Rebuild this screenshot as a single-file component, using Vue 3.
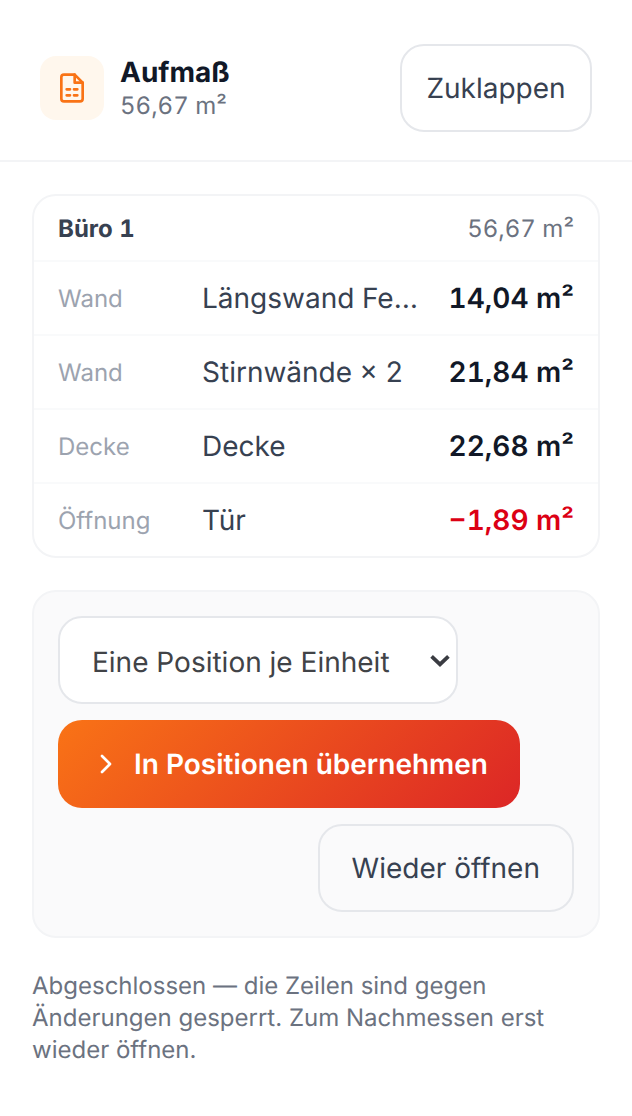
<script setup>
const rows = [
  { kind: "Wand", name: "Längswand Fenster", value: "14,04 m²" },
  { kind: "Wand", name: "Stirnwände × 2", value: "21,84 m²" },
  { kind: "Decke", name: "Decke", value: "22,68 m²" },
  { kind: "Öffnung", name: "Tür", value: "−1,89 m²", negative: true },
];
</script>

<template>
  <div class="page">
    <header class="header">
      <div class="header-left">
        <div class="icon-box">
          <svg width="16" height="16" viewBox="0 0 24 24" fill="none" stroke="#f97316" stroke-width="2" stroke-linecap="round" stroke-linejoin="round">
            <path d="M14 2H6a2 2 0 0 0-2 2v16a2 2 0 0 0 2 2h12a2 2 0 0 0 2-2V8z" />
            <path d="M14 2v6h6" />
            <path d="M8 13h2.5M13.5 13h2.5M8 17.5h2.5M13.5 17.5h2.5" />
          </svg>
        </div>
        <div>
          <div class="title">Aufmaß</div>
          <div class="subtitle">56,67 m²</div>
        </div>
      </div>
      <button class="btn-outline collapse">Zuklappen</button>
    </header>

    <main class="content">
      <section class="card">
        <div class="card-head">
          <span class="room">Büro 1</span>
          <span class="room-total">56,67 m²</span>
        </div>
        <div class="row" v-for="row in rows" :key="row.kind + row.name">
          <span class="kind">{{ row.kind }}</span>
          <span class="name">{{ row.name }}</span>
          <span class="value" :class="{ negative: row.negative }">{{ row.value }}</span>
        </div>
      </section>

      <section class="panel">
        <div class="select-wrap">
          <select class="mode">
            <option>Eine Position je Einheit</option>
            <option>Eine Position je Zeile</option>
          </select>
          <svg class="select-arrow" width="10" height="7" viewBox="0 0 10 7" fill="none" stroke="#3a3c42" stroke-width="1.9">
            <path d="M0.8 1.2 5 5.2l4.2-4" />
          </svg>
        </div>
        <button class="btn-primary">
          <svg width="16" height="16" viewBox="0 0 24 24" fill="none" stroke="#fff" stroke-width="2" stroke-linecap="round" stroke-linejoin="round">
            <path d="m9 18 6-6-6-6" />
          </svg>
          In Positionen übernehmen
        </button>
        <div class="panel-actions">
          <button class="btn-outline reopen">Wieder öffnen</button>
        </div>
      </section>

      <p class="note">
        Abgeschlossen — die Zeilen sind gegen Änderungen gesperrt. Zum Nachmessen erst wieder öffnen.
      </p>
    </main>
  </div>
</template>

<style>
html,
body {
  background: #fff;
}
</style>

<style scoped>
.page {
  zoom: 2;
  font-family: Inter, "Liberation Sans", sans-serif;
  text-rendering: geometricPrecision;
  color: #111827;
  height: 558px;
  overflow: hidden;
}

button,
select {
  text-rendering: geometricPrecision;
}

.header {
  display: flex;
  align-items: center;
  justify-content: space-between;
  height: 81px;
  padding: 8px 20px 0;
  box-sizing: border-box;
  border-bottom: 1px solid #f3f4f6;
}

.header-left {
  display: flex;
  align-items: center;
  gap: 8px;
}

.icon-box {
  width: 32px;
  height: 32px;
  border-radius: 8px;
  background: #fff7ed;
  display: flex;
  align-items: center;
  justify-content: center;
}

.title {
  font-size: 14px;
  font-weight: 700;
  line-height: 18px;
}

.subtitle {
  font-size: 12px;
  line-height: 16px;
  color: #6b7280;
  font-variant-numeric: tabular-nums;
}

.btn-outline {
  font-family: inherit;
  font-size: 14px;
  color: #374151;
  background: #fff;
  border: 1px solid #e5e7eb;
  border-radius: 12px;
  height: 44px;
  padding: 0 12px;
  box-sizing: border-box;
}

.collapse {
  width: 96px;
  padding: 0;
}

.content {
  padding: 16px 16px 0;
}

.card {
  border: 1px solid #f3f4f6;
  border-radius: 12px;
  background: #fff;
  overflow: hidden;
  font-variant-numeric: tabular-nums;
}

.card-head {
  display: flex;
  justify-content: space-between;
  align-items: center;
  height: 32px;
  padding: 0 12px;
  box-sizing: border-box;
}

.room {
  font-size: 12px;
  font-weight: 700;
  color: #374151;
}

.room-total {
  font-size: 12px;
  color: #6b7280;
}

.row {
  display: flex;
  align-items: center;
  height: 37px;
  padding: 0 12px;
  box-sizing: border-box;
  border-top: 1px solid #f9fafb;
}

.kind {
  width: 72px;
  flex-shrink: 0;
  font-size: 12px;
  color: #9ca3af;
}

.name {
  flex: 1;
  min-width: 0;
  font-size: 14px;
  color: #374151;
  white-space: nowrap;
  overflow: hidden;
  text-overflow: ellipsis;
}

.value {
  flex-shrink: 0;
  margin-left: 14px;
  font-size: 14px;
  font-weight: 600;
  color: #111827;
}

.value.negative {
  color: #dc0014;
}

.panel {
  margin-top: 16px;
  padding: 12px;
  border: 1px solid #f3f4f6;
  border-radius: 12px;
  background: #fafafb;
  display: flex;
  flex-direction: column;
  align-items: flex-start;
  gap: 8px;
}

.select-wrap {
  position: relative;
  width: 200px;
  height: 44px;
}

.mode {
  appearance: none;
  display: block;
  font-family: inherit;
  font-size: 14px;
  color: #414347;
  width: 100%;
  height: 100%;
  padding: 2px 24px 0 16px;
  box-sizing: border-box;
  background: #fff;
  border: 1px solid #e5e7eb;
  border-radius: 12px;
}

.select-arrow {
  position: absolute;
  right: 4px;
  top: 19px;
  pointer-events: none;
}

.btn-primary {
  font-family: inherit;
  font-size: 14px;
  font-weight: 600;
  color: #fff;
  height: 44px;
  padding: 0 16px;
  border: none;
  border-radius: 12px;
  background: linear-gradient(135deg, #f97316, #dc2626);
  display: flex;
  align-items: center;
  gap: 6px;
}

.panel-actions {
  align-self: stretch;
  display: flex;
  justify-content: flex-end;
}

.reopen {
  padding: 0 16px;
  background: transparent;
}

.note {
  margin: 16px 0 0;
  font-size: 12px;
  line-height: 16px;
  color: #6b7280;
}
</style>
